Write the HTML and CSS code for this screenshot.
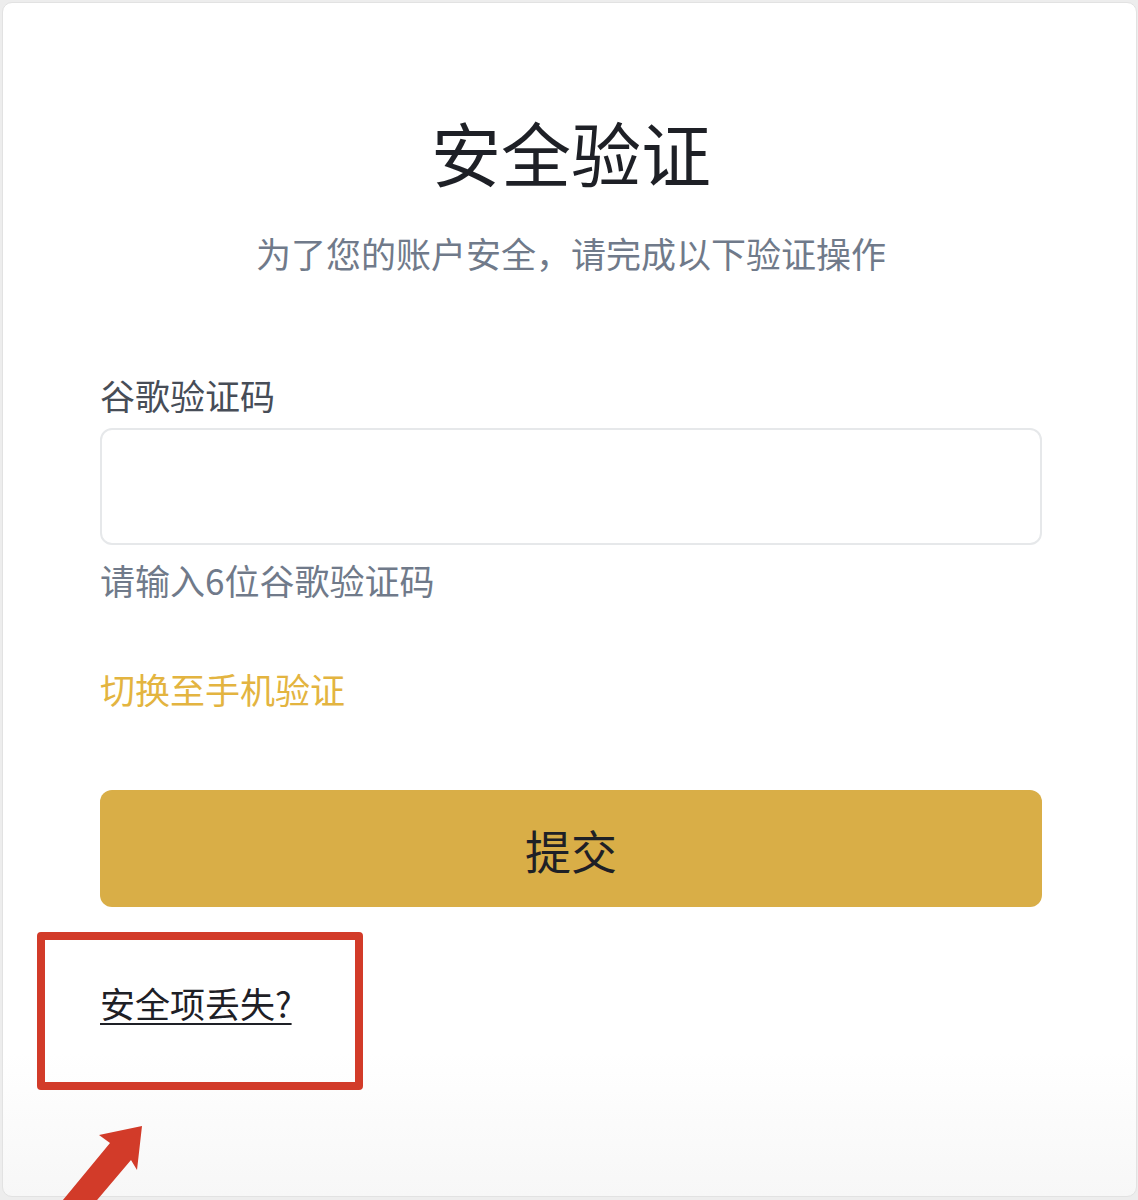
FILE: index.html
```html
<!DOCTYPE html>
<html lang="zh-CN">
<head>
  <meta charset="UTF-8">
  <meta name="viewport" content="width=device-width, initial-scale=1.0">
  <title>安全验证</title>
  <link rel="stylesheet" href="styles.css">
</head>
<body>
  <div class="card">
    <h1 class="title">安全验证</h1>
    <p class="subtitle">为了您的账户安全，请完成以下验证操作</p>

    <!-- Google code form -->
    <label class="label" for="code">谷歌验证码</label>
    <input id="code" class="input" type="text">
    <div class="hint">请输入6位谷歌验证码</div>

    <a class="switch" href="#">切换至手机验证</a>

    <button class="submit">提交</button>

    <a class="lost" href="#">安全项丢失?</a>

    <!-- annotation -->
    <div class="mark"></div>
  </div>

  <svg class="arrow" width="1138" height="1200" viewBox="0 0 1138 1200">
    <polygon points="142,1126 99,1135 110,1143 58,1206 92,1206 131,1160 137,1170" fill="#d23b29"/>
  </svg>
</body>
</html>
```

FILE: styles.css
```css
* {
  box-sizing: border-box;
  margin: 0;
  padding: 0;
}

body {
  width: 1138px;
  height: 1200px;
  overflow: hidden;
  position: relative;
  background-color: #ededed;
  font-family: "Noto Sans CJK SC", "Noto Sans", sans-serif;
  color: #1e2026;
}

.card {
  position: relative;
  width: 1135px;
  height: 1195px;
  margin: 2px 0 3px 2px;
  padding: 114px 94px 0 97px;
  border: 1px solid #e2e2e2;
  border-radius: 10px;
  background: linear-gradient(to bottom, #ffffff 88%, #f7f7f7 100%);
  display: flex;
  flex-direction: column;
  align-items: flex-start;
}

.title {
  align-self: stretch;
  text-align: center;
  font-size: 70px;
  line-height: 1;
  font-weight: 400;
  color: #1e2026;
}

.subtitle {
  align-self: stretch;
  text-align: center;
  margin-top: 48px;
  font-size: 35px;
  line-height: 1;
  color: #707a8a;
}

.label {
  margin-top: 107px;
  font-size: 35px;
  line-height: 1;
  color: #474d57;
}

.input {
  align-self: stretch;
  margin-top: 16px;
  height: 117px;
  border: 2px solid #e6e8ea;
  border-radius: 12px;
  background: #fff;
  outline: none;
}

.hint {
  margin-top: 17px;
  font-size: 35px;
  line-height: 1;
  color: #707a8a;
}

.switch {
  margin-top: 74px;
  font-size: 35px;
  line-height: 1;
  color: #e3b440;
  text-decoration: none;
}

.submit {
  align-self: stretch;
  margin-top: 84px;
  height: 117px;
  border: none;
  border-radius: 12px;
  background-color: #d9ae47;
  color: #1e2026;
  font-family: inherit;
  font-size: 46px;
  cursor: pointer;
}

.lost {
  margin-top: 78px;
  font-size: 35px;
  line-height: 1;
  color: #1e2026;
  text-decoration: underline;
  text-underline-offset: 5px;
  text-decoration-thickness: 2px;
}

.mark {
  position: absolute;
  left: 34px;
  top: 929px;
  width: 326px;
  height: 158px;
  border: 8px solid #d23b29;
  border-radius: 4px;
}

.arrow {
  position: absolute;
  left: 0;
  top: 0;
  pointer-events: none;
}
```
